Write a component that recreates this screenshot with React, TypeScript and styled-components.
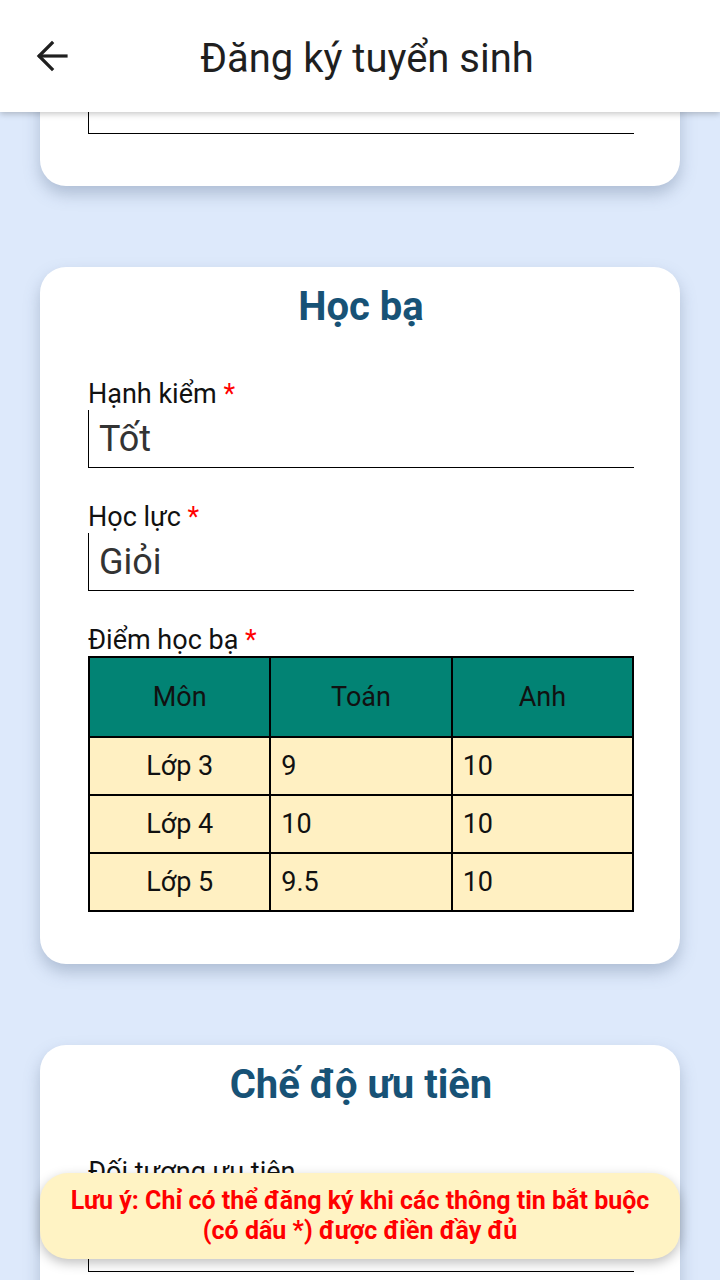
import { useLayoutEffect, useRef } from "react";
import { styled, createGlobalStyle } from "styled-components";

const GlobalStyle = createGlobalStyle`
  html, body {
    margin: 0;
    padding: 0;
    height: 100%;
    background: #dde9fb;
    font-family: Roboto, "Noto Sans", "Liberation Sans", sans-serif;
  }
  #root {
    height: 100%;
  }
`;

const Screen = styled.div`
  position: relative;
  display: flex;
  flex-direction: column;
  height: 100vh;
  background: #dde9fb;
  overflow: hidden;
`;

const TopBar = styled.header`
  position: relative;
  z-index: 2;
  flex: 0 0 112px;
  display: flex;
  align-items: center;
  background: #ffffff;
  box-shadow: 0 2px 6px rgba(0, 0, 0, 0.22);
`;

const BackButton = styled.button`
  display: flex;
  align-items: center;
  justify-content: center;
  width: 48px;
  height: 48px;
  margin-left: 28px;
  padding: 0;
  border: none;
  background: transparent;
  color: #1f1f1f;
`;

const Title = styled.h1`
  flex: 1;
  margin: 4px 76px 0 0;
  padding-left: 14px;
  text-align: center;
  font-size: 40px;
  font-weight: 400;
  color: #1f1f1f;
`;

const Scroller = styled.main`
  flex: 1;
  overflow: hidden;
`;

const Content = styled.div`
  display: flex;
  flex-direction: column;
  gap: 81px;
  padding: 81px 40px 200px;
`;

const Card = styled.section`
  background: #ffffff;
  border-radius: 26px;
  padding: 16px 46px 52px 48px;
  box-shadow: 0 8px 16px rgba(90, 110, 140, 0.35);
`;

const CardTitle = styled.h2`
  margin: 0 0 48px;
  text-align: center;
  font-size: 40px;
  font-weight: 700;
  color: #175276;
`;

const Field = styled.div`
  display: flex;
  flex-direction: column;
  & + & {
    margin-top: 33px;
  }
`;

const Label = styled.label`
  font-size: 27px;
  color: #111111;
`;

const Required = styled.span`
  color: #ff0000;
`;

const Input = styled.div<{ $tall?: boolean }>`
  display: flex;
  align-items: center;
  height: ${(p) => (p.$tall ? 83 : 57)}px;
  padding-left: 10px;
  border-left: 1px solid #000;
  border-bottom: 1px solid #000;
  font-size: 36px;
  color: #333333;
`;

const Grades = styled.table`
  width: 100%;
  border-collapse: collapse;
  table-layout: fixed;
  font-size: 27px;
  color: #111111;
`;

const HeadCell = styled.th`
  height: 76px;
  border: 2px solid #000;
  background: #028374;
  font-weight: 400;
  text-align: center;
`;

const Cell = styled.td<{ $center?: boolean }>`
  height: 56px;
  padding: 0 10px;
  border: 2px solid #000;
  background: #fff0c2;
  text-align: ${(p) => (p.$center ? "center" : "left")};
`;

const Note = styled.div`
  position: absolute;
  z-index: 3;
  left: 40px;
  right: 40px;
  bottom: 21px;
  padding: 13px 16px;
  border-radius: 28px;
  background: #fff3c4;
  box-shadow: 0 4px 12px rgba(0, 0, 0, 0.25);
  text-align: center;
  font-size: 25px;
  line-height: 30px;
  font-weight: 700;
  color: #ff0000;
`;

const grades = [
  { name: "Lớp 3", math: "9", english: "10" },
  { name: "Lớp 4", math: "10", english: "10" },
  { name: "Lớp 5", math: "9.5", english: "10" },
];

function ArrowBack() {
  return (
    <svg width="40" height="40" viewBox="0 0 40 40" fill="none" stroke="currentColor" strokeWidth="3.2" strokeLinecap="square">
      <path d="M8 20H34" />
      <path d="M20 7L7 20L20 33" strokeLinejoin="miter" />
    </svg>
  );
}

export default function App() {
  const scrollerRef = useRef<HTMLElement>(null);
  const firstCardRef = useRef<HTMLElement>(null);

  // the screen is scrolled so that only the end of the first card shows
  useLayoutEffect(() => {
    const scroller = scrollerRef.current;
    const card = firstCardRef.current;
    if (scroller && card) {
      scroller.scrollTop = card.offsetTop + card.offsetHeight - scroller.offsetTop - 74;
    }
  }, []);

  return (
    <Screen>
      <GlobalStyle />
      <TopBar>
        <BackButton aria-label="Quay lại">
          <ArrowBack />
        </BackButton>
        <Title>Đăng ký tuyển sinh</Title>
      </TopBar>
      <Scroller ref={scrollerRef}>
        <Content>
          <Card ref={firstCardRef}>
            <Input />
          </Card>

          <Card>
            <CardTitle>Học bạ</CardTitle>
            <Field>
              <Label>
                Hạnh kiểm <Required>*</Required>
              </Label>
              <Input>Tốt</Input>
            </Field>
            <Field>
              <Label>
                Học lực <Required>*</Required>
              </Label>
              <Input>Giỏi</Input>
            </Field>
            <Field>
              <Label>
                Điểm học bạ <Required>*</Required>
              </Label>
              <Grades>
                <thead>
                  <tr>
                    <HeadCell>Môn</HeadCell>
                    <HeadCell>Toán</HeadCell>
                    <HeadCell>Anh</HeadCell>
                  </tr>
                </thead>
                <tbody>
                  {grades.map((g) => (
                    <tr key={g.name}>
                      <Cell $center>{g.name}</Cell>
                      <Cell>{g.math}</Cell>
                      <Cell>{g.english}</Cell>
                    </tr>
                  ))}
                </tbody>
              </Grades>
            </Field>
          </Card>

          <Card>
            <CardTitle>Chế độ ưu tiên</CardTitle>
            <Field>
              <Label>Đối tượng ưu tiên</Label>
              <Input $tall />
            </Field>
          </Card>
        </Content>
      </Scroller>
      <Note>
        Lưu ý: Chỉ có thể đăng ký khi các thông tin bắt buộc
        <br />
        (có dấu *) được điền đầy đủ
      </Note>
    </Screen>
  );
}
